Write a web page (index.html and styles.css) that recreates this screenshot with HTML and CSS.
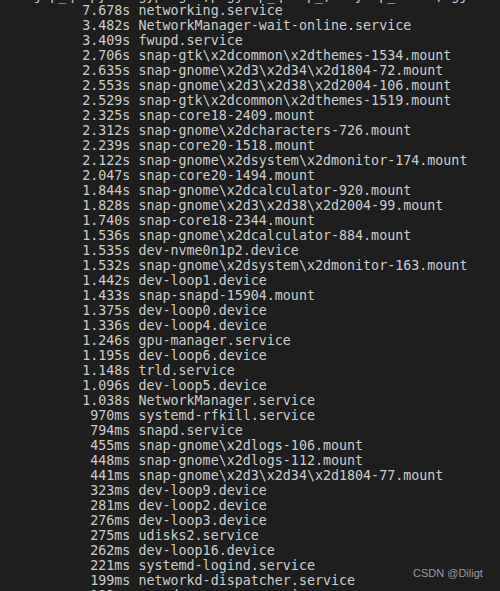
FILE: index.html
```
<!DOCTYPE html>
<html>
<head>
<meta charset="utf-8">
<link rel="stylesheet" href="styles.css">
</head>
<body>
<div class="term">
<pre class="out">    jmp_q  py:   gyp  g  ,p gj  p_q   p_,   y  p_     , gj     j   ;  q
          7.678s networking.service
          3.482s NetworkManager-wait-online.service
          3.409s fwupd.service
          2.706s snap-gtk\x2dcommon\x2dthemes-1534.mount
          2.635s snap-gnome\x2d3\x2d34\x2d1804-72.mount
          2.553s snap-gnome\x2d3\x2d38\x2d2004-106.mount
          2.529s snap-gtk\x2dcommon\x2dthemes-1519.mount
          2.325s snap-core18-2409.mount
          2.312s snap-gnome\x2dcharacters-726.mount
          2.239s snap-core20-1518.mount
          2.122s snap-gnome\x2dsystem\x2dmonitor-174.mount
          2.047s snap-core20-1494.mount
          1.844s snap-gnome\x2dcalculator-920.mount
          1.828s snap-gnome\x2d3\x2d38\x2d2004-99.mount
          1.740s snap-core18-2344.mount
          1.536s snap-gnome\x2dcalculator-884.mount
          1.535s dev-nvme0n1p2.device
          1.532s snap-gnome\x2dsystem\x2dmonitor-163.mount
          1.442s dev-loop1.device
          1.433s snap-snapd-15904.mount
          1.375s dev-loop0.device
          1.336s dev-loop4.device
          1.246s gpu-manager.service
          1.195s dev-loop6.device
          1.148s trld.service
          1.096s dev-loop5.device
          1.038s NetworkManager.service
           970ms systemd-rfkill.service
           794ms snapd.service
           455ms snap-gnome\x2dlogs-106.mount
           448ms snap-gnome\x2dlogs-112.mount
           441ms snap-gnome\x2d3\x2d34\x2d1804-77.mount
           323ms dev-loop9.device
           281ms dev-loop2.device
           276ms dev-loop3.device
           275ms udisks2.service
           262ms dev-loop16.device
           221ms systemd-logind.service
           199ms networkd-dispatcher.service
           193ms snapd.apparmor.service</pre>
<div class="mark">CSDN @Diligt</div>
</div>
</body>
</html>
```
FILE: styles.css
```
html, body {
  margin: 0;
  padding: 0;
  background: #1e1e1e;
}
.term {
  position: relative;
  width: 500px;
  height: 591px;
  overflow: hidden;
  background: #1e1e1e;
}
.out {
  margin: -12px 0 0 0;
  padding: 0 0 0 2px;
  font-family: "DejaVu Sans Mono", monospace;
  font-size: 13.33px;
  line-height: 15px;
  color: #cccccc;
  white-space: pre;
}
.mark {
  position: absolute;
  left: 413px;
  top: 567px;
  font-family: "Liberation Sans", Arial, sans-serif;
  font-size: 11px;
  color: #9a9a9a;
  letter-spacing: 0;
}
```
